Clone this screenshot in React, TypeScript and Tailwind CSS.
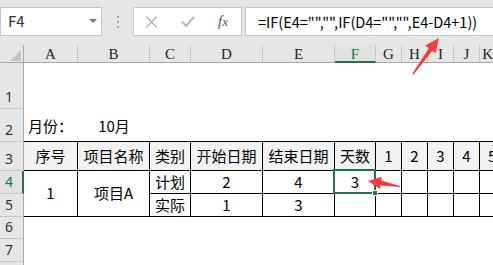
import React from "react";

const colHeaders = ["A", "B", "C", "D", "E", "F", "G", "H", "I", "J", "K"];

function ColHeader({ label, active }: { label: string; active?: boolean }) {
  return active ? (
    <div className="flex items-center justify-center bg-[#e2e2e2] border-r border-r-[#c6c6c6] border-b-2 border-b-[#217346] font-['Liberation_Serif',serif] text-[15px] leading-none text-[#217346] pt-[3px]">
      {label}
    </div>
  ) : (
    <div className="flex items-center justify-center bg-[#e6e6e6] border-r border-r-[#c6c6c6] border-b border-b-[#a8a8a8] font-['Liberation_Serif',serif] text-[15px] leading-none text-[#222] pt-[2px] overflow-hidden">
      {label}
    </div>
  );
}

function RowHeader({ n, active }: { n: number; active?: boolean }) {
  return active ? (
    <div className="flex items-end pl-[5px] pb-[1px] bg-[#e2e2e2] border-r-2 border-r-[#217346] border-b border-b-[#c6c6c6] font-['Noto_Sans',sans-serif] text-[14px] leading-[20px] text-[#217346]">
      {n}
    </div>
  ) : (
    <div className="flex items-end pl-[5px] pb-[1px] bg-[#e6e6e6] border-r border-r-[#a8a8a8] border-b border-b-[#c6c6c6] font-['Noto_Sans',sans-serif] text-[14px] leading-[20px] text-[#333]">
      {n}
    </div>
  );
}

const cjk = "font-['Microsoft_YaHei','Noto_Sans_CJK_SC',sans-serif]";

function Cell({ children, head }: { children?: React.ReactNode; head?: boolean }) {
  return head ? (
    <div className="flex items-center justify-center bg-[#f2f2f2] border-r border-b border-black text-[15px] text-black whitespace-nowrap overflow-hidden">
      {children}
    </div>
  ) : (
    <div className="flex items-center justify-center bg-white border-r border-b border-black text-[15px] text-black whitespace-nowrap">
      {children}
    </div>
  );
}

export default function App() {
  return (
    <div className={`relative w-[493px] h-[265px] overflow-hidden bg-white ${cjk}`}>
      {/* Formula bar area */}
      <div className="h-[45px] bg-[#e6e6e6] pt-[7px] flex">
        <div className="relative shrink-0 w-[102px] h-[29px] bg-white border border-[#c6c6c6] flex items-center pl-[7px] text-[15px] text-[#333]">
          F4
          <svg className="absolute left-[88px] top-[11px]" width="9" height="5" viewBox="0 0 9 5">
            <path d="M0 0 L8 0 L4 4 Z" fill="#777" />
          </svg>
        </div>
        <div className="shrink-0 w-[31px] h-[29px] flex flex-col items-center justify-center gap-[3px]">
          <div className="w-[2px] h-[2px] bg-[#a8a8a8]" />
          <div className="w-[2px] h-[2px] bg-[#a8a8a8]" />
          <div className="w-[2px] h-[2px] bg-[#a8a8a8]" />
        </div>
        <div className="shrink-0 w-[109px] h-[29px] bg-white border border-[#c6c6c6] flex items-center">
          <svg className="ml-[11px]" width="13" height="12" viewBox="0 0 13 12">
            <path d="M1 0.5 L12 11.5 M12 0.5 L1 11.5" stroke="#b4b4b4" strokeWidth="1.4" fill="none" />
          </svg>
          <svg className="ml-[23px]" width="14" height="11" viewBox="0 0 14 11">
            <path d="M0.8 5.5 L5 9.8 L13.2 0.8" stroke="#b4b4b4" strokeWidth="2" fill="none" />
          </svg>
          <span className="ml-[23px] font-['Liberation_Serif',serif] italic text-[15px] text-[#555] leading-none">
            f<span className="text-[13px]">x</span>
          </span>
        </div>
        <div className="shrink-0 ml-[3px] w-[260px] h-[29px] bg-white border border-[#c6c6c6] flex items-center pl-[12px] text-[14.5px] text-black whitespace-nowrap">
          =IF(E4="","",IF(D4="","",E4-D4+1))
        </div>
      </div>

      {/* Sheet grid */}
      <div className="grid grid-cols-[24px_54px_72px_41px_72px_72px_41px_26px_26px_26px_26px_1fr] grid-rows-[18px_46px_33px_29px_23px_23px_22px_23px_20px]">
        {/* column header row */}
        <div className="relative bg-[#e6e6e6] border-r border-r-[#a8a8a8] border-b border-b-[#a8a8a8]">
          <svg className="absolute left-[10px] top-[5px]" width="11" height="11" viewBox="0 0 11 11">
            <path d="M11 0 L11 11 L0 11 Z" fill="#c4c4c4" />
          </svg>
        </div>
        {colHeaders.map((c) => (
          <ColHeader key={c} label={c} active={c === "F"} />
        ))}

        {/* row 1 */}
        <RowHeader n={1} />
        <div className="col-span-11 bg-white" />

        {/* row 2 */}
        <RowHeader n={2} />
        <div className="flex items-end pl-[4px] pb-[5px] leading-[20px] text-[15px] text-black border-b border-black whitespace-nowrap">
          月份：
        </div>
        <div className="flex items-end justify-center pb-[5px] leading-[20px] text-[15px] text-black border-b border-black">
          10月
        </div>
        <div className="border-b border-black" />
        <div className="border-b border-black" />
        <div className="border-b border-black" />
        <div className="border-b border-black" />
        <div className="border-b border-black" />
        <div className="border-b border-black" />
        <div className="border-b border-black" />
        <div className="border-b border-black" />
        <div className="border-b border-black" />

        {/* row 3 */}
        <RowHeader n={3} />
        <Cell head>序号</Cell>
        <Cell head>项目名称</Cell>
        <Cell head>类别</Cell>
        <Cell head>开始日期</Cell>
        <Cell head>结束日期</Cell>
        <Cell head>天数</Cell>
        <Cell head>1</Cell>
        <Cell head>2</Cell>
        <Cell head>3</Cell>
        <Cell head>4</Cell>
        <div className="flex items-center pl-[8px] bg-[#f2f2f2] border-b border-black text-[15px] text-black">5</div>

        {/* row 4 */}
        <RowHeader n={4} active />
        <div className="row-span-2 flex items-center justify-center border-r border-b border-black text-[15px] text-black">1</div>
        <div className="row-span-2 flex items-center justify-center border-r border-b border-black text-[15px] text-black">项目A</div>
        <Cell>计划</Cell>
        <Cell>2</Cell>
        <Cell>4</Cell>
        <div className="relative flex items-center justify-center bg-white border-r border-b border-black text-[15px] text-black">
          3
          <div className="absolute left-[-2px] top-[-2px] right-[-1px] bottom-[-1px] border-2 border-[#217346]" />
          <div className="absolute right-[-3px] bottom-[-3px] w-[6px] h-[6px] bg-[#217346] border border-white" />
        </div>
        <Cell />
        <Cell />
        <Cell />
        <Cell />
        <div className="border-b border-black" />

        {/* row 5 */}
        <RowHeader n={5} />
        <Cell>实际</Cell>
        <Cell>1</Cell>
        <Cell>3</Cell>
        <Cell />
        <Cell />
        <Cell />
        <Cell />
        <Cell />
        <div className="border-b border-black" />

        {/* row 6 */}
        <RowHeader n={6} />
        <div className="col-span-11" />

        {/* row 7 */}
        <RowHeader n={7} />
        <div className="col-span-11" />

        {/* row 8 */}
        <div className="bg-[#e6e6e6] border-r border-r-[#a8a8a8]" />
        <div className="col-span-11" />
      </div>

      {/* red annotation arrows */}
      <svg className="absolute left-0 top-0 pointer-events-none" width="493" height="265" viewBox="0 0 493 265">
        <polygon
          points="439,38 435.6,53 432.3,50.8 413.6,74.4 412.4,73.6 429.1,48.1 425.3,45.5"
          fill="#f43a3a"
        />
        <polygon
          points="368,181 381.7,176.8 381.2,180.5 400.1,186 399.9,187 380.4,185.5 380,189"
          fill="#f43a3a"
        />
      </svg>
    </div>
  );
}
